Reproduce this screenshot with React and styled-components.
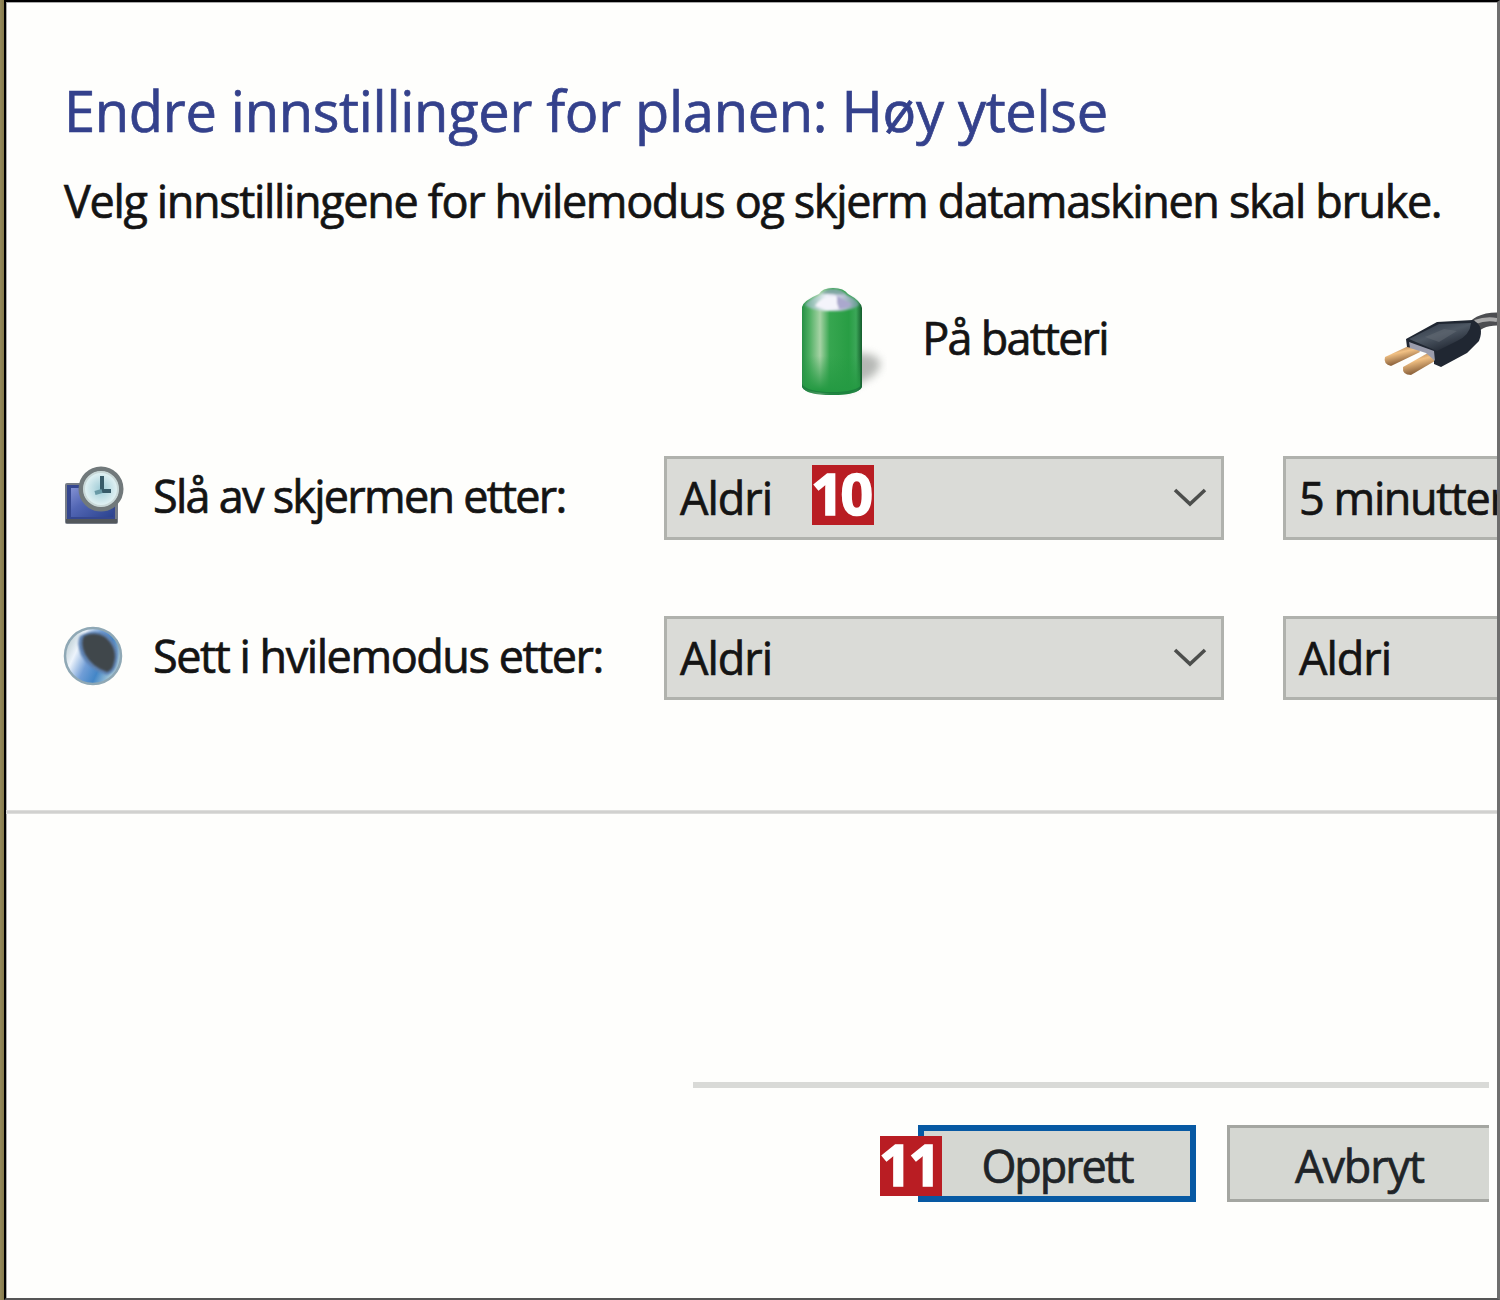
import styled, { createGlobalStyle } from "styled-components";

const GlobalStyle = createGlobalStyle`
  * {
    box-sizing: border-box;
  }
  body {
    margin: 0;
    font-family: "Open Sans", "Noto Sans", sans-serif;
    color: #141414;
    -webkit-text-stroke: 0.7px currentColor;
  }
`;

const Screen = styled.div`
  width: 1500px;
  height: 1300px;
  padding-left: 4px;
  background: linear-gradient(to right, #958a5c, #857a4b 4px);
  overflow: hidden;
`;

const Window = styled.div`
  height: 100%;
  display: flex;
  flex-direction: column;
  background-color: #fefefc;
  border-style: solid;
  border-width: 2px 3px 2px 2px;
  border-color: #000 #6e6e6e #555 #000;
  box-shadow: inset 1px 1px 0 #aaa;
  overflow: hidden;
`;

const Settings = styled.div`
  height: 808px;
  padding-left: 59px;
  overflow: hidden;
`;

const Title = styled.h1`
  height: 86px;
  margin: 65px 0 0 -1px;
  font-size: 56px;
  font-weight: 400;
  line-height: 86px;
  white-space: nowrap;
  color: #34418c;
  letter-spacing: -0.3px;
`;

const Intro = styled.p`
  height: 60px;
  margin: 18px 0 0 -1px;
  font-size: 45px;
  line-height: 60px;
  white-space: nowrap;
  letter-spacing: -1.36px;
`;

const Sources = styled.div`
  height: 120px;
  margin-top: 55px;
  display: flex;
  padding-left: 730px;
`;

const BatterySlot = styled.div`
  width: 128px;
`;

const SourceLabel = styled.div`
  width: 461px;
  padding-top: 22px;
  font-size: 45px;
  line-height: 60px;
  white-space: nowrap;
  letter-spacing: -1.8px;
`;

const PlugSlot = styled.div`
  padding-top: 19px;
`;

const Row = styled.div`
  display: grid;
  grid-template-columns: 88px 511px 560px 560px;
  height: 84px;
  margin-top: ${(props) => props.$top}px;
`;

const RowIcon = styled.div`
  padding-top: 8px;
  margin-left: -6px;
`;

const RowLabel = styled.div`
  font-size: 45px;
  line-height: 80px;
  white-space: nowrap;
  letter-spacing: ${(props) => props.$spacing}px;
`;

const Select = styled.div`
  display: flex;
  align-items: center;
  justify-content: space-between;
  height: 84px;
  width: 560px;
  margin-left: ${(props) => props.$left || 0}px;
  padding: 0 13px;
  border: 3px solid #b0b2ad;
  background-color: #dadbd7;
  font-size: 45px;
  white-space: nowrap;
  letter-spacing: ${(props) => props.$spacing || -1}px;
`;

const Value = styled.div`
  display: flex;
  align-items: center;
  height: 78px;
  line-height: 82px;
`;

const Word = styled.span`
  width: 132px;
`;

const Badge = styled.span`
  display: block;
  width: 62px;
  height: 60px;
  flex: none;
  margin-top: -6px;
  background-color: #b91d23;
  color: #fff;
  font-family: "Noto Sans", "Open Sans", sans-serif;
  font-size: 57px;
  font-weight: 700;
  line-height: 57px;
  text-align: left;
  text-indent: -1px;
  letter-spacing: -3px;
  -webkit-text-stroke: 1.5px #fff;
`;

const Divider = styled.div`
  height: 4px;
  flex: none;
  background: linear-gradient(#e3e3e1, #cbcbc9, #e3e3e1);
`;

const Footer = styled.div`
  width: 796px;
  margin: 268px 0 0 687px;
`;

const FooterRule = styled.div`
  height: 6px;
  background-color: #d9dad7;
`;

const Buttons = styled.div`
  display: flex;
  gap: 31px;
  margin-top: 37px;
  padding-left: 225px;
`;

const Button = styled.button`
  position: relative;
  width: ${(props) => props.$width}px;
  height: 77px;
  flex: none;
  padding: 4px 0 0;
  border: ${(props) => (props.$primary ? "6px solid #0759a3" : "3px solid #a4a6a1")};
  border-right-width: ${(props) => (props.$primary ? 6 : 0)}px;
  background-color: #d5d7d2;
  color: #202428;
  font-family: inherit;
  font-size: 45px;
  line-height: 60px;
  letter-spacing: ${(props) => props.$spacing}px;
  -webkit-text-stroke: 0.7px #202428;
`;

// Step marker that hangs over the left edge of the button
const StepBadge = styled(Badge)`
  position: absolute;
  left: -44px;
  top: 5px;
  margin: 0;
`;

const Battery = () => (
  <svg width="92" height="118" viewBox="0 0 92 118">
    <defs>
      <linearGradient id="cell">
        <stop offset="0" stopColor="#259044" />
        <stop offset="0.12" stopColor="#4cae61" />
        <stop offset="0.3" stopColor="#a7d3a5" />
        <stop offset="0.46" stopColor="#37a650" />
        <stop offset="0.78" stopColor="#289d44" />
        <stop offset="0.9" stopColor="#3ba758" />
        <stop offset="1" stopColor="#145c2c" />
      </linearGradient>
      <linearGradient id="cellFade" x2="0" y2="1">
        <stop offset="0.4" stopColor="#259a43" stopOpacity="0" />
        <stop offset="0.95" stopColor="#259a43" />
      </linearGradient>
      <linearGradient id="cap">
        <stop offset="0" stopColor="#6daa96" />
        <stop offset="0.4" stopColor="#eef1fa" />
        <stop offset="0.65" stopColor="#c8cbe0" />
        <stop offset="1" stopColor="#61988d" />
      </linearGradient>
      <filter id="soft" x="-50%" y="-50%" width="200%" height="200%">
        <feGaussianBlur stdDeviation="4" />
      </filter>
      <filter id="capSoft">
        <feGaussianBlur stdDeviation="1" />
      </filter>
    </defs>
    <path d="M50 66 L74 68 Q94 74 78 90 L48 106Z" fill="#8f938f" opacity="0.65" filter="url(#soft)" />
    <path d="M7 21 Q8 15 24 8 Q27 2 38 2 Q49 2 53 8 Q66 15 67 22 L67 101 Q63 109 37 109 Q11 109 7 101Z" fill="url(#cell)" />
    <path d="M9 45 L65 45 L65 101 Q59 107 37 107 Q14 107 9 101Z" fill="url(#cellFade)" />
    <path d="M7 98 Q12 106 37 106 Q62 106 67 98 L67 101 Q63 109 37 109 Q11 109 7 101Z" fill="#16713a" opacity="0.6" />
    <g filter="url(#capSoft)">
      <path d="M10 19 Q12 14 25 9 Q29 3 38 3 Q47 3 52 9 Q63 14 64 19 Q57 25 37 25 Q17 25 10 19Z" fill="url(#cap)" />
      <path d="M27 8 Q31 3 38 3 Q46 3 50 8 Q45 9 38 8Z" fill="#7fa7a2" />
      <path d="M20 20 Q27 9 41 10 L47 22 Q34 26 20 20Z" fill="#f4f4fb" />
      <path d="M42 10 L57 18 Q53 23 44 23 L42 17Z" fill="#aaa8cd" />
    </g>
  </svg>
);

const Plug = () => (
  <svg width="116" height="90" viewBox="0 0 116 90">
    <defs>
      <linearGradient id="prong" x1="0" y1="0" x2="0.35" y2="1">
        <stop offset="0.15" stopColor="#8e6542" />
        <stop offset="0.5" stopColor="#f2c184" />
        <stop offset="0.9" stopColor="#926840" />
      </linearGradient>
      <linearGradient id="plugTop" x2="0.7" y2="1">
        <stop offset="0" stopColor="#2a3340" />
        <stop offset="0.5" stopColor="#4e5864" />
        <stop offset="1" stopColor="#1c222d" />
      </linearGradient>
    </defs>
    <path d="M88 28 Q96 14 116 14" fill="none" stroke="#4c4d50" strokeWidth="13" />
    <path d="M94 17 Q105 13 116 15" fill="none" stroke="#aaa" strokeWidth="4" />
    <path d="M4 52 L34 38 L39 47 L10 61 Q2 59 4 52Z" fill="url(#prong)" />
    <path d="M22 62 L54 44 L59 53 L30 70 Q21 70 22 62Z" fill="url(#prong)" />
    <path d="M25 34 L56 17 L92 15 Q104 21 98 36 L86 48 L60 62 L53 59 L53 47 L26 42Z" fill="#202732" />
    <path d="M28 34 L58 19 L90 18 Q89 30 76 36 L56 46Z" fill="url(#plugTop)" />
    <path d="M28 37 L53 46 L54 56 L45 48 L29 43Z" fill="#9a9cac" />
    <path d="M44 32 L63 24 L76 26 L58 37Z" fill="#626a73" opacity="0.55" />
  </svg>
);

const ScreenTimer = () => (
  <svg width="68" height="68" viewBox="0 0 68 68">
    <defs>
      <linearGradient id="monitor" x2="1" y2="1">
        <stop offset="0" stopColor="#8290d2" />
        <stop offset="0.4" stopColor="#5266b4" />
        <stop offset="1" stopColor="#2b438e" />
      </linearGradient>
      <radialGradient id="dial">
        <stop offset="0" stopColor="#9ecbd6" />
        <stop offset="1" stopColor="#f0fafa" />
      </radialGradient>
    </defs>
    <rect x="6" y="19" width="53" height="41" rx="2" fill="#777d87" />
    <rect x="8" y="21" width="48" height="34" fill="#35478f" />
    <rect x="12" y="24" width="42" height="29" fill="url(#monitor)" />
    <path d="M7 57 H58" stroke="#53585c" strokeWidth="4" />
    <circle cx="42" cy="25" r="20" fill="url(#dial)" stroke="#71797b" strokeWidth="5" />
    <circle cx="42" cy="25" r="17" fill="none" stroke="#c9d8d8" strokeWidth="2" />
    <path d="M43 12 V27 H52" fill="none" stroke="#385b69" strokeWidth="4" />
    <path d="M36 29 L43 27" stroke="#6899a5" strokeWidth="4" />
  </svg>
);

const Moon = () => (
  <svg width="68" height="68" viewBox="0 0 68 68">
    <defs>
      <linearGradient id="moon" x1="0.05" y1="0.25" x2="0.9" y2="0.65">
        <stop offset="0" stopColor="#c0d0d5" />
        <stop offset="0.22" stopColor="#edf4fc" />
        <stop offset="0.5" stopColor="#719ed7" />
        <stop offset="0.75" stopColor="#4386c7" />
        <stop offset="1" stopColor="#a2c6d8" />
      </linearGradient>
      <filter id="moonSoft">
        <feGaussianBlur stdDeviation="1.2" />
      </filter>
    </defs>
    <circle cx="34" cy="32" r="28" fill="url(#moon)" stroke="#8fa8b5" strokeWidth="2.5" />
    <path d="M21 12 Q34 4 47 10 Q62 21 58 38 Q56 49 48 51 Q30 46 22 31 Q17 18 21 12Z" fill="#5f83b4" filter="url(#moonSoft)" />
    <path d="M25 12 Q36 7 46 13 Q59 24 55 39 Q53 47 48 48 Q33 43 26 30 Q21 19 25 12Z" fill="#41464b" filter="url(#moonSoft)" />
  </svg>
);

const Chevron = () => (
  <svg width="36" height="24" viewBox="0 0 36 24">
    <path d="M3 4 L18 18 L33 4" fill="none" stroke="#4c4e4c" strokeWidth="3.6" />
  </svg>
);

const App = () => {
  return (
    <>
      <GlobalStyle />
      <Screen>
        <Window>
          <Settings>
            <Title>Endre innstillinger for planen: Høy ytelse</Title>
            <Intro>
              Velg innstillingene for hvilemodus og skjerm datamaskinen skal
              bruke.
            </Intro>
            <Sources>
              <BatterySlot>
                <Battery />
              </BatterySlot>
              <SourceLabel>På batteri</SourceLabel>
              <PlugSlot>
                <Plug />
              </PlugSlot>
            </Sources>
            <Row $top={50}>
              <RowIcon>
                <ScreenTimer />
              </RowIcon>
              <RowLabel $spacing={-1.75}>Slå av skjermen etter:</RowLabel>
              <Select>
                <Value>
                  <Word>Aldri</Word>
                  <Badge>10</Badge>
                </Value>
                <Chevron />
              </Select>
              <Select $left={59} $spacing={-1.4}>
                <Value>5 minutter</Value>
              </Select>
            </Row>
            <Row $top={76}>
              <RowIcon>
                <Moon />
              </RowIcon>
              <RowLabel $spacing={-1.45}>Sett i hvilemodus etter:</RowLabel>
              <Select>
                <Value>Aldri</Value>
                <Chevron />
              </Select>
              <Select $left={59}>
                <Value>Aldri</Value>
              </Select>
            </Row>
          </Settings>
          <Divider />
          <Footer>
            <FooterRule />
            <Buttons>
              <Button $primary $width={278} $spacing={-2.1}>
                <StepBadge>11</StepBadge>
                Opprett
              </Button>
              <Button $width={262} $spacing={-1.1}>
                Avbryt
              </Button>
            </Buttons>
          </Footer>
        </Window>
      </Screen>
    </>
  );
};

export default App;
